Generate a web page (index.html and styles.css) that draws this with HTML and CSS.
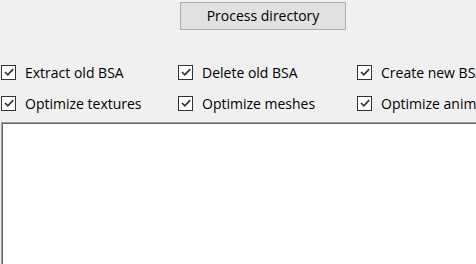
FILE: index.html
```html
<!DOCTYPE html>
<html>
<head>
<meta charset="utf-8">
<link rel="stylesheet" href="styles.css">
</head>
<body>
<div class="top">
  <button class="btn">Process directory</button>
</div>
<div class="options">
  <label class="opt"><span class="box"><svg viewBox="0 0 12 12" width="12" height="12"><polyline points="2,6 4.8,8.8 10.2,3.2" fill="none" stroke="#333" stroke-width="1.7"/></svg></span>Extract old BSA</label>
  <label class="opt"><span class="box"><svg viewBox="0 0 12 12" width="12" height="12"><polyline points="2,6 4.8,8.8 10.2,3.2" fill="none" stroke="#333" stroke-width="1.7"/></svg></span>Delete old BSA</label>
  <label class="opt"><span class="box"><svg viewBox="0 0 12 12" width="12" height="12"><polyline points="2,6 4.8,8.8 10.2,3.2" fill="none" stroke="#333" stroke-width="1.7"/></svg></span>Create new BSA</label>
  <label class="opt"><span class="box"><svg viewBox="0 0 12 12" width="12" height="12"><polyline points="2,6 4.8,8.8 10.2,3.2" fill="none" stroke="#333" stroke-width="1.7"/></svg></span>Optimize textures</label>
  <label class="opt"><span class="box"><svg viewBox="0 0 12 12" width="12" height="12"><polyline points="2,6 4.8,8.8 10.2,3.2" fill="none" stroke="#333" stroke-width="1.7"/></svg></span>Optimize meshes</label>
  <label class="opt"><span class="box"><svg viewBox="0 0 12 12" width="12" height="12"><polyline points="2,6 4.8,8.8 10.2,3.2" fill="none" stroke="#333" stroke-width="1.7"/></svg></span>Optimize animations</label>
</div>
<div class="log"></div>
</body>
</html>
```
FILE: styles.css
```css
html, body {
  margin: 0;
  padding: 0;
  background: #f0f0f0;
  overflow: hidden;
  width: 476px;
  height: 264px;
}
body {
  font-family: "Open Sans", "Noto Sans", sans-serif;
  font-size: 14px;
  color: #000;
}
.top {
  padding: 2px 0 0 180px;
  height: 29px;
  box-sizing: border-box;
}
.btn {
  display: block;
  width: 166px;
  height: 28px;
  background: #e1e1e1;
  border: 1px solid #adadad;
  font-family: inherit;
  font-size: 14px;
  color: #000;
  padding: 0 0 2px;
  margin: 0;
}
.options {
  display: grid;
  grid-template-columns: 177px 179px 200px;
  grid-auto-rows: 31px;
  padding: 30px 0 0 1px;
  height: 93px;
  box-sizing: border-box;
  white-space: nowrap;
}
.opt {
  display: flex;
  align-items: center;
  gap: 9px;
  height: 26px;
}
.box {
  width: 15px;
  height: 15px;
  border: 1px solid #333;
  background: #fff;
  box-sizing: border-box;
  display: flex;
  align-items: center;
  justify-content: center;
}
.box svg {
  flex: none;
  display: block;
}
.log {
  margin-left: 1px;
  height: 200px;
  width: 520px;
  background: #fff;
  border-top: 1px solid #a0a0a0;
  border-left: 1px solid #a0a0a0;
  box-shadow: inset 1px 1px 0 #696969;
}
```
